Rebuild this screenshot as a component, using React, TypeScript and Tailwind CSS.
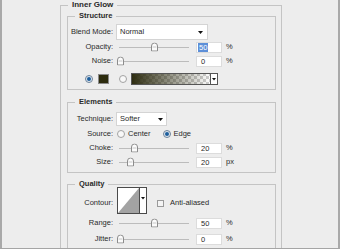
import React from "react";

const Arrow = () => (
    <svg width="5" height="3" viewBox="0 0 5 3" className="shrink-0">
        <path d="M0 0H5L2.5 3Z" fill="#111" />
    </svg>
);

const Thumb = ({ left }: { left: number }) => (
    <svg
        width="7"
        height="9"
        viewBox="0 0 7 9"
        className="absolute top-1/2 -translate-y-1/2"
        style={{ left }}
    >
        <path d="M0.5 3.5Q0.5 0.5 3.5 0.5Q6.5 0.5 6.5 3.5V8.5H0.5Z" fill="#fbfbfb" stroke="#8c8c8c" />
        <path d="M1.5 4.5H5.5" stroke="#c8c8c8" />
    </svg>
);

function Label({ children, className = "" }: { children: React.ReactNode; className?: string }) {
    return <span className={`w-[45px] shrink-0 text-right ${className}`}>{children}</span>;
}

function SliderRow({ label, value, thumb, unit, selected }: { label: string; value: string; thumb: number; unit: string; selected?: boolean }) {
    return (
        <div className="flex h-[14px] items-center">
            <Label>{label}</Label>
            <div className="relative ml-[3px] h-full w-[73px] shrink-0">
                <div className="absolute left-[3px] right-0 top-1/2 h-px bg-[#bcbcbc]" />
                <Thumb left={thumb} />
            </div>
            <div className="ml-[7px] flex h-[11px] w-[26px] items-center border border-[#dcdcdc] bg-white pl-[1px]">
                {selected ? (
                    <span className="bg-[#5d8fd8] px-[1px] leading-[9px] text-white">{value}</span>
                ) : (
                    <span className="pl-[3px] leading-[9px]">{value}</span>
                )}
            </div>
            <span className="ml-[4px]">{unit}</span>
        </div>
    );
}

function Radio({ on, className = "" }: { on?: boolean; className?: string }) {
    return on ? (
        <span className={`flex h-[8px] w-[8px] shrink-0 items-center justify-center rounded-full border border-[#6f8399] bg-[#dfe7ef] ${className}`}>
            <span className="block h-[4px] w-[4px] rounded-full bg-[#1d5e9c]" />
        </span>
    ) : (
        <span className={`block h-[8px] w-[8px] shrink-0 rounded-full border border-[#a2a2a2] bg-[#f8f8f8] ${className}`} />
    );
}

function Group({ title, className = "", children }: { title: string; className?: string; children: React.ReactNode }) {
    return (
        <fieldset className={`border border-[#c4c4c4] ${className}`}>
            <legend className="ml-[7px] px-[4px] text-[7.5px] font-bold leading-[10px]">{title}</legend>
            {children}
        </fieldset>
    );
}

export default function App() {
    return (
        <div className="h-[249px] w-[340px] overflow-hidden border-x-2 border-b border-x-[#a9a9a9] border-b-[#a5a5a5] bg-[#ededed] font-['Liberation_Sans',Arial,sans-serif] text-[7.5px] leading-[10px] text-[#2a2a2a]">
            <fieldset className="ml-[58px] h-[270px] w-[222px] border border-[#c4c4c4]">
                <legend className="ml-[7px] px-[4px] text-[8px] font-bold leading-[10px]">Inner Glow</legend>
                <div className="pl-[6px] pr-[5px] pt-[1px]">
                    {/* Structure */}
                    <Group title="Structure">
                        <div className="pb-[3px]">
                            <div className="mt-[3px] flex h-[16px] items-center">
                                <Label>Blend Mode:</Label>
                                <div className="ml-[3px] flex h-[16px] w-[92px] items-center justify-between border border-[#d4d4d4] bg-white pl-[3px] pr-[4px]">
                                    <span>Normal</span>
                                    <Arrow />
                                </div>
                            </div>
                            <SliderRow label="Opacity:" value="50" thumb={35} unit="%" selected />
                            <SliderRow label="Noise:" value="0" thumb={1} unit="%" />
                            <div className="mt-[4px] flex h-[14px] items-center pl-[17px]">
                                <Radio on />
                                <span className="ml-[5px] block h-[10px] w-[11px] border border-[#8a8a8a] bg-[#2d2c0e]" />
                                <Radio className="ml-[10px]" />
                                <svg width="87" height="12" viewBox="0 0 87 12" className="ml-[4px]">
                                    <defs>
                                        <pattern id="chk" width="6" height="6" patternUnits="userSpaceOnUse">
                                            <rect width="6" height="6" fill="#fff" />
                                            <rect width="3" height="3" fill="#cfcfcf" />
                                            <rect x="3" y="3" width="3" height="3" fill="#cfcfcf" />
                                        </pattern>
                                        <linearGradient id="grd" x1="0" x2="1" y1="0" y2="0">
                                            <stop offset="0" stopColor="#2d2c10" stopOpacity="1" />
                                            <stop offset="1" stopColor="#2d2c10" stopOpacity="0" />
                                        </linearGradient>
                                    </defs>
                                    <rect x="0.5" y="0.5" width="79" height="11" fill="url(#chk)" />
                                    <rect x="0.5" y="0.5" width="79" height="11" fill="url(#grd)" stroke="#555" />
                                    <rect x="79.5" y="0.5" width="7" height="11" fill="#fff" stroke="#555" />
                                    <path d="M81 5H85L83 7.5Z" fill="#111" />
                                </svg>
                            </div>
                        </div>
                    </Group>

                    {/* Elements */}
                    <Group title="Elements" className="mt-[7px]">
                        <div className="pb-[3px]">
                            <div className="mt-[5px] flex h-[14px] items-center">
                                <Label>Technique:</Label>
                                <div className="ml-[3px] flex h-[14px] w-[51px] items-center justify-between border border-[#d4d4d4] bg-white pl-[3px] pr-[3px]">
                                    <span>Softer</span>
                                    <Arrow />
                                </div>
                            </div>
                            <div className="flex h-[15px] items-center">
                                <Label>Source:</Label>
                                <Radio className="ml-[4px]" />
                                <span className="ml-[3px]">Center</span>
                                <Radio on className="ml-[12px]" />
                                <span className="ml-[3px]">Edge</span>
                            </div>
                            <SliderRow label="Choke:" value="20" thumb={15} unit="%" />
                            <SliderRow label="Size:" value="20" thumb={11} unit="px" />
                        </div>
                    </Group>

                    {/* Quality */}
                    <Group title="Quality" className="mt-[6px] h-[80px]">
                        <div className="-mt-[2px] flex h-[27px] items-center">
                            <Label className="mt-[5px]">Contour:</Label>
                            <svg width="30" height="27" viewBox="0 0 30 27" className="ml-[4px] shrink-0">
                                <rect x="0.5" y="0.5" width="22" height="26" fill="#fff" stroke="#4a4a4a" />
                                <path d="M1 26L22 1V26Z" fill="#a3a3a3" />
                                <rect x="22.5" y="0.5" width="7" height="26" fill="#fff" stroke="#4a4a4a" />
                                <path d="M24 10H28L26 12.5Z" fill="#111" />
                            </svg>
                            <span className="ml-[10px] mt-[5px] block h-[7px] w-[7px] border border-[#9a9a9a] bg-[#f4f4f4]" />
                            <span className="ml-[6px] mt-[5px]">Anti-aliased</span>
                        </div>
                        <div className="mt-[2px]">
                            <SliderRow label="Range:" value="50" thumb={35} unit="%" />
                        </div>
                        <div className="mt-[2px]">
                            <SliderRow label="Jitter:" value="0" thumb={1} unit="%" />
                        </div>
                    </Group>
                </div>
            </fieldset>
        </div>
    );
}
